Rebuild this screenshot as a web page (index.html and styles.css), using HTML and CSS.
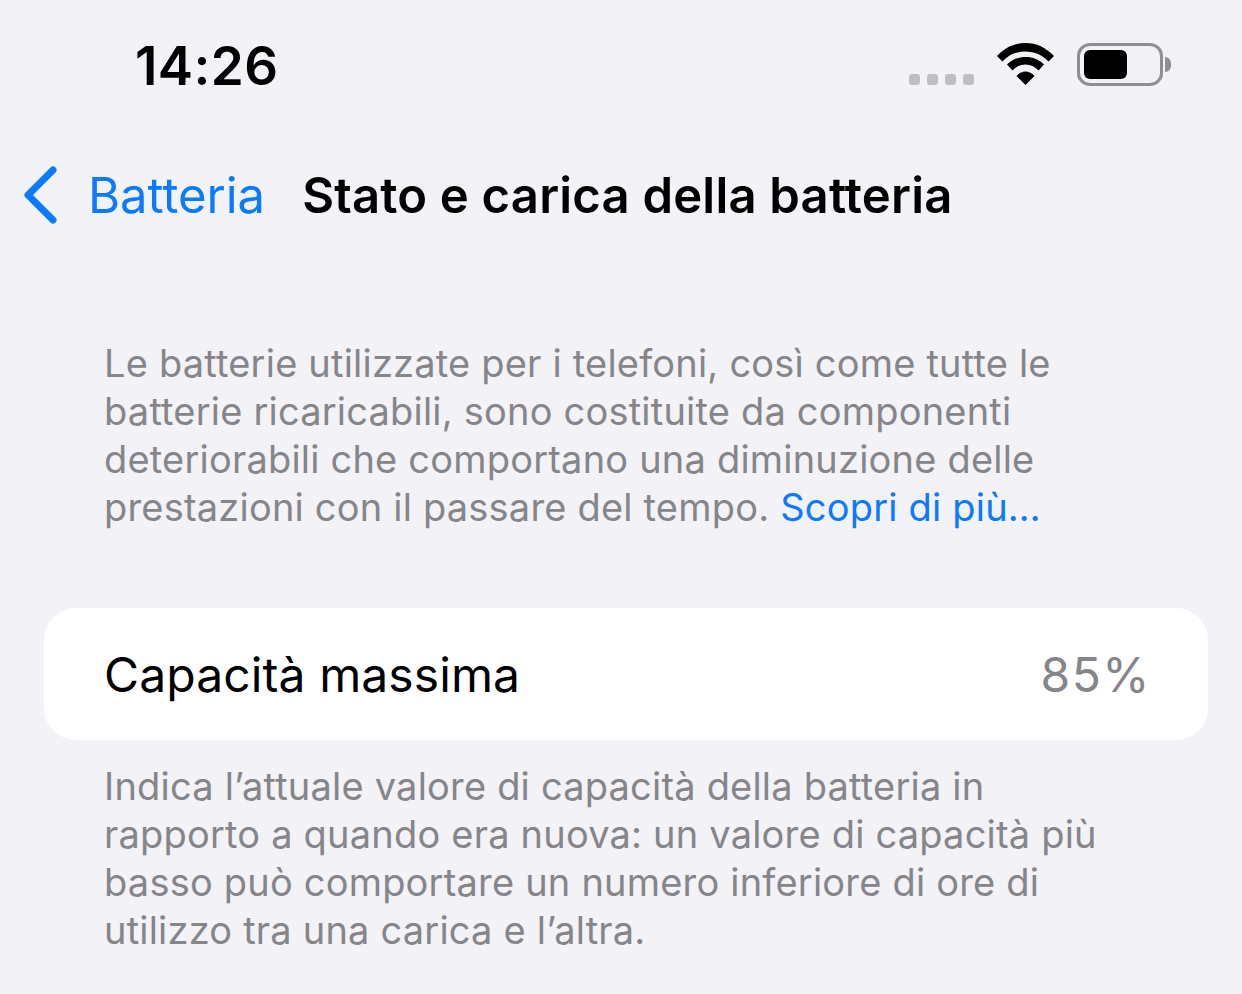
FILE: index.html
```html
<!DOCTYPE html>
<html lang="it">
<head>
  <meta charset="UTF-8" />
  <title>Stato e carica della batteria</title>
  <link rel="stylesheet" href="styles.css">
</head>
<body>
  <div class="status-bar">
    <div class="time">14:26</div>
    <div class="status-icons">
      <div class="signal"><span></span><span></span><span></span><span></span></div>
      <svg class="wifi" width="60" height="42" viewBox="0 0 60 42">
        <path d="M30.500 0C19.500 0 10 4.500 2 13L7.500 18.500C13.500 12 21.500 8.500 30.500 8.500S47.500 12 53.500 18.500L59 13C51 4.500 41.500 0 30.500 0Z" fill="#000"/>
        <path d="M30.500 14C23 14 17 16.500 12 21.500L17.500 27.500C21 23.500 25.500 21.500 30.500 21.500S40 23.500 43.500 27.500L49 21.500C44 16.500 38 14 30.500 14Z" fill="#000"/>
        <path d="M30.500 28.500C27 28.500 24 30 21.500 33L30.500 42L39.500 33C37 30 34 28.500 30.500 28.500Z" fill="#000"/>
      </svg>
      <div class="battery">
        <div class="battery-body"><div class="battery-fill"></div></div>
        <div class="battery-cap"></div>
      </div>
    </div>
  </div>

  <div class="nav-bar">
    <svg class="back" width="36" height="60" viewBox="0 0 36 60">
      <path d="M31 5L6 30L31 55" fill="none" stroke="#0a7aff" stroke-width="7" stroke-linecap="round" stroke-linejoin="round"/>
    </svg>
    <span class="back-label">Batteria</span>
    <h1 class="title">Stato e carica della batteria</h1>
  </div>

  <p class="note intro">Le batterie utilizzate per i telefoni, così come tutte le<br>batterie ricaricabili, sono costituite da componenti<br>deteriorabili che comportano una diminuzione delle<br>prestazioni con il passare del tempo. <a class="link">Scopri di più…</a></p>

  <div class="card">
    <span class="card-label">Capacità massima</span>
    <span class="card-value">85%</span>
  </div>

  <p class="note footer">Indica l’attuale valore di capacità della batteria in<br>rapporto a quando era nuova: un valore di capacità più<br>basso può comportare un numero inferiore di ore di<br>utilizzo tra una carica e l’altra.</p>
</body>
</html>
```
FILE: styles.css
```css
* {
  box-sizing: border-box;
}
body {
  margin: 0;
  height: 994px;
  overflow: hidden;
  background: #f2f2f7;
  font-family: Inter, "Liberation Sans", sans-serif;
  color: #000;
}
.status-bar {
  display: flex;
  justify-content: space-between;
  align-items: flex-start;
  height: 159px;
  padding: 36px 71px 0 135px;
}
.time {
  font-size: 53px;
  font-weight: 600;
  line-height: 60px;
  letter-spacing: 0.4px;
}
.status-icons {
  display: flex;
  align-items: flex-start;
  padding-top: 7px;
}
.signal {
  display: flex;
  gap: 7px;
  margin-top: 31px;
  margin-right: 21px;
}
.signal span {
  width: 11px;
  height: 11px;
  border-radius: 3px;
  background: #bfbfc3;
}
.wifi {
  margin-right: 22px;
}
.battery {
  display: flex;
  align-items: center;
  height: 43px;
}
.battery-body {
  width: 86px;
  height: 43px;
  padding: 4px;
  border: 3px solid #8e8e93;
  border-radius: 13px;
}
.battery-fill {
  width: 43px;
  height: 100%;
  background: #000;
  border-radius: 6px;
}
.battery-cap {
  width: 6px;
  height: 15px;
  margin-left: 2px;
  background: #8e8e93;
  border-radius: 0 8px 8px 0;
}
.nav-bar {
  display: flex;
  align-items: center;
  height: 72px;
  padding-left: 22px;
}
.back {
  flex: none;
}
.back-label {
  margin-left: 30px;
  font-size: 49px;
  color: #0a7aff;
}
.title {
  margin: 0 0 0 37px;
  font-size: 49px;
  font-weight: 600;
  letter-spacing: 0.2px;
}
.note {
  margin: 0;
  padding-left: 104px;
  font-size: 38px;
  letter-spacing: 0.2px;
  line-height: 48px;
  color: #85858a;
  white-space: nowrap;
}
.intro {
  margin-top: 108px;
}
.link {
  color: #0a7aff;
}
.card {
  display: flex;
  justify-content: space-between;
  align-items: center;
  height: 132px;
  margin: 77px 34px 0 44px;
  padding: 0 57px 0 60px;
  background: #fff;
  border-radius: 32px;
  font-size: 48px;
}
.card-label {
  letter-spacing: 0.1px;
}
.card-value {
  color: #85858a;
  letter-spacing: 1.5px;
}
.footer {
  margin-top: 22px;
}
```
